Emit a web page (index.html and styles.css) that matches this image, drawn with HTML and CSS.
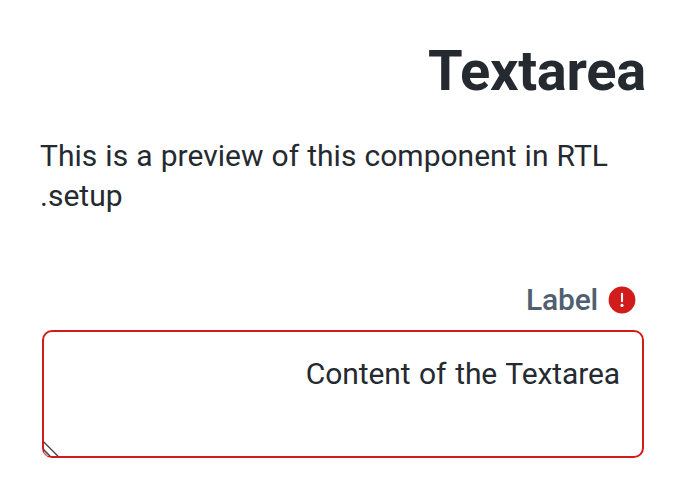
FILE: index.html
```html
<!DOCTYPE html>
<html lang="en" dir="rtl">
<head>
<meta charset="utf-8">
<title>Textarea</title>
<link rel="stylesheet" href="styles.css">
</head>
<body>
<main class="preview">
  <h1 class="title">Textarea</h1>
  <p class="intro">This is a preview of this component in RTL setup.</p>
  <div class="field">
    <label class="label" for="area">
      <svg class="icon" viewBox="0 0 28 28" aria-hidden="true"><circle cx="14" cy="14" r="13.4" fill="#d21c1c"/><path d="M14 7.8v7.5" stroke="#fff" stroke-width="2.1" stroke-linecap="round"/><circle cx="14" cy="19.4" r="1.6" fill="#fff"/></svg>
      <span>Label</span>
    </label>
    <div class="control">
      <textarea class="area" id="area">Content of the Textarea</textarea>
      <svg class="grip" viewBox="0 0 16 16" aria-hidden="true"><path d="M1 9l6 6H4L1 12z" fill="#f0a0a0"/><path d="M.5 .8L15 15.3M.8 8.8L7 15" fill="none" stroke="#4a4a4a" stroke-width="1.4"/></svg>
    </div>
  </div>
</main>
</body>
</html>
```

FILE: styles.css
```css
body {
  margin: 0;
  background: #fff;
  color: #252a31;
  font-family: Roboto, sans-serif;
}
.preview {
  padding: 39px 40px 40px;
}
.title {
  margin: 0;
  font-size: 56px;
  font-weight: 700;
  line-height: 64px;
  letter-spacing: -0.25px;
}
.intro {
  margin: 33px 0 0;
  font-size: 30px;
  line-height: 40px;
  text-align: left;
  word-spacing: 0.7px;
}
.field {
  display: flex;
  flex-direction: column;
  margin: 64px 2px 0;
}
.label {
  display: flex;
  align-items: center;
  gap: 10px;
  padding-right: 8px;
  color: #4f5e71;
  font-size: 30px;
  font-weight: 500;
  line-height: 40px;
  letter-spacing: -0.2px;
}
.icon {
  width: 28px;
  height: 28px;
}
.control {
  position: relative;
  display: flex;
  margin-top: 10px;
}
.area {
  box-sizing: border-box;
  width: 100%;
  height: 128px;
  margin: 0;
  padding: 22px;
  border: 2px solid #d21c1c;
  border-radius: 10px;
  background: #fff;
  color: #252a31;
  font: 400 30px/40px Roboto, sans-serif;
  letter-spacing: -0.1px;
  word-spacing: 1.4px;
  overflow: hidden;
  outline: none;
  resize: none;
}
.grip {
  position: absolute;
  left: 1px;
  bottom: 1px;
  width: 16px;
  height: 16px;
  border-bottom-left-radius: 5px;
  pointer-events: none;
}
```
